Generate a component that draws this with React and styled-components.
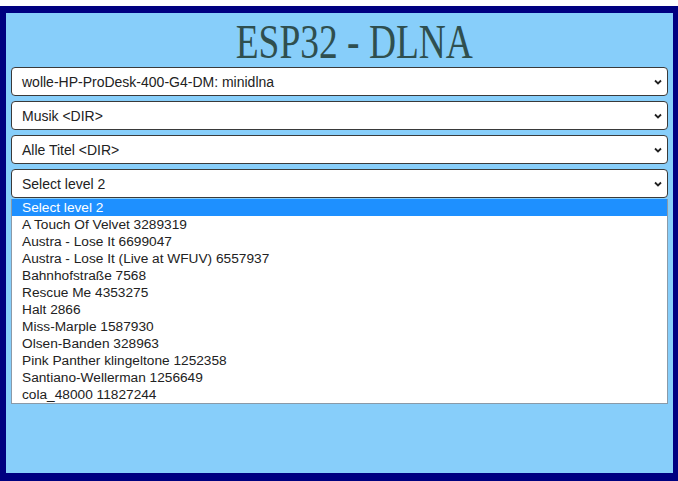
import styled, { createGlobalStyle } from "styled-components";

const GlobalStyle = createGlobalStyle`
  html, body {
    margin: 0;
    padding: 0;
    background: #ffffff;
  }
  body {
    font-family: "Liberation Sans", Arial, sans-serif;
  }
`;

const Page = styled.div`
  padding-top: 6px;
  height: 481px;
  box-sizing: border-box;
`;

const Frame = styled.div`
  height: 100%;
  box-sizing: border-box;
  border-style: solid;
  border-color: #000080;
  border-width: 7px 5px 8px 6px;
  background: #87cefa;
  padding: 0 5px;
  display: flex;
  flex-direction: column;
`;

const Title = styled.h1`
  margin: 0;
  height: 54px;
  padding: 3px 0 0 38px;
  box-sizing: border-box;
  display: flex;
  align-items: center;
  justify-content: center;
  font-family: "Liberation Serif", "Times New Roman", serif;
  font-weight: normal;
  font-size: 48px;
  color: #2f4f4f;
  transform: scaleX(0.78);
`;

const Selects = styled.div`
  display: flex;
  flex-direction: column;
  gap: 5px;
`;

const SelectBox = styled.div`
  height: 29px;
  box-sizing: border-box;
  background: #ffffff;
  border: 1px solid #3a3a3a;
  border-radius: 4px;
  display: flex;
  align-items: center;
  justify-content: space-between;
  padding: 0 4px 0 10px;
  font-size: 14px;
  color: #222;
`;

const Chevron = () => (
  <svg width="10" height="10" viewBox="0 0 10 10">
    <path d="M2 3.5 L5 6.5 L8 3.5" fill="none" stroke="#222" strokeWidth="1.8" />
  </svg>
);

const DropList = styled.ul`
  list-style: none;
  margin: 1px 0 0;
  padding: 0;
  background: #ffffff;
  border: 1px solid #8a9aa8;
  border-top: none;
`;

const Item = styled.li`
  height: 17px;
  line-height: 17px;
  padding-left: 10px;
  font-size: 13.7px;
  color: ${(p) => (p.$active ? "#ffffff" : "#222")};
  background: ${(p) => (p.$active ? "#1e90ff" : "transparent")};
`;

const selects = [
  "wolle-HP-ProDesk-400-G4-DM: minidlna",
  "Musik <DIR>",
  "Alle Titel <DIR>",
  "Select level 2",
];

const items = [
  "Select level 2",
  "A Touch Of Velvet 3289319",
  "Austra - Lose It 6699047",
  "Austra - Lose It (Live at WFUV) 6557937",
  "Bahnhofstraße 7568",
  "Rescue Me 4353275",
  "Halt 2866",
  "Miss-Marple 1587930",
  "Olsen-Banden 328963",
  "Pink Panther klingeltone 1252358",
  "Santiano-Wellerman 1256649",
  "cola_48000 11827244",
];

export default function App() {
  return (
    <Page>
      <GlobalStyle />
      <Frame>
        <Title>ESP32 - DLNA</Title>
        <Selects>
          {selects.map((s) => (
            <SelectBox key={s}>
              <span>{s}</span>
              <Chevron />
            </SelectBox>
          ))}
        </Selects>
        <DropList>
          {items.map((it, i) => (
            <Item key={it} $active={i === 0}>
              {it}
            </Item>
          ))}
        </DropList>
      </Frame>
    </Page>
  );
}
